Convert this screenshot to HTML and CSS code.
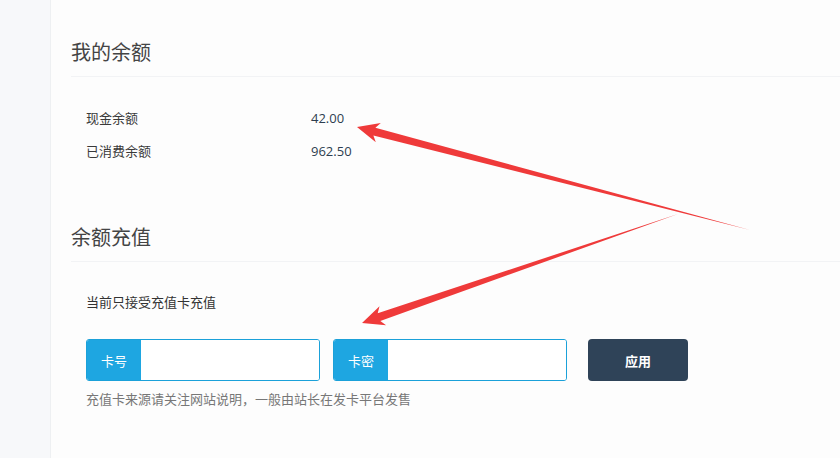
FILE: index.html
```html
<!DOCTYPE html>
<html lang="zh-CN">
<head>
    <meta charset="UTF-8">
    <meta name="viewport" content="width=device-width, initial-scale=1.0">
    <title>我的余额</title>
    <link rel="stylesheet" href="styles.css">
</head>
<body>
    <!-- Barra lateral -->
    <div class="sidebar"></div>

    <div class="main">
        <!-- Saldo -->
        <h2 class="section-title">我的余额</h2>
        <div class="balance">
            <div class="balance-row">
                <span class="balance-label">现金余额</span>
                <span class="balance-value">42.00</span>
            </div>
            <div class="balance-row">
                <span class="balance-label">已消费余额</span>
                <span class="balance-value">962.50</span>
            </div>
        </div>

        <!-- Recarga -->
        <h2 class="section-title second">余额充值</h2>
        <div class="recharge">
            <p class="recharge-note">当前只接受充值卡充值</p>
            <div class="recharge-form">
                <div class="input-group">
                    <span class="input-addon">卡号</span>
                    <input type="text" class="input-field">
                </div>
                <div class="input-group">
                    <span class="input-addon">卡密</span>
                    <input type="text" class="input-field">
                </div>
                <button type="button" class="apply-button">应用</button>
            </div>
            <p class="recharge-help">充值卡来源请关注网站说明，一般由站长在发卡平台发售</p>
        </div>
    </div>

    <!-- Flechas de anotación -->
    <svg class="annotations" width="840" height="458" viewBox="0 0 840 458" xmlns="http://www.w3.org/2000/svg">
        <polygon fill="#ef3a3a" points="357,127 375.8,142.3 373.4,135.5 750,230 375.4,127.7 380.8,122.9"></polygon>
        <polygon fill="#ef3a3a" points="362,323 386.1,325.3 380.3,320.9 678,214 377.7,313.3 379.5,306.3"></polygon>
    </svg>
</body>
</html>
```

FILE: styles.css
```css
body {
    margin: 0;
    height: 458px;
    display: flex;
    background-color: #fdfdfd;
    font-family: "Noto Sans CJK SC", "Open Sans", sans-serif;
    color: #333;
    overflow: hidden;
}

.sidebar {
    width: 50px;
    flex-shrink: 0;
    background-color: #f7f8fa;
    border-right: 1px solid #eef0f2;
}

.main {
    flex: 1;
    padding: 37px 0 0 20px;
}

.section-title {
    margin: 0;
    font-size: 20px;
    font-weight: normal;
    line-height: 30px;
    padding-bottom: 9px;
    border-bottom: 1px solid #f2f3f5;
    color: #444;
}

.section-title.second {
    margin-top: 55px;
}

.balance {
    margin-top: 24px;
    padding-left: 15px;
}

.balance-row {
    display: flex;
    align-items: center;
    height: 33px;
    font-size: 13px;
}

.balance-label {
    width: 225px;
    color: #3a3a3a;
}

.balance-value {
    font-family: "Open Sans", sans-serif;
    color: #2d3e50;
}

.recharge {
    padding-left: 15px;
}

.recharge-note {
    margin: 30px 0 0;
    font-size: 13px;
    line-height: 20px;
}

.recharge-form {
    margin-top: 27px;
    display: flex;
    align-items: center;
}

.input-group {
    display: flex;
    width: 234px;
    height: 42px;
    box-sizing: border-box;
    border: 1px solid #1ba1d9;
    border-radius: 3px;
    overflow: hidden;
    margin-right: 13px;
}

.input-addon {
    width: 54px;
    flex-shrink: 0;
    background-color: #1ea6e1;
    color: #fff;
    font-size: 13px;
    display: flex;
    align-items: center;
    justify-content: center;
}

.input-field {
    flex: 1;
    min-width: 0;
    border: none;
    outline: none;
    background: #fff;
}

.apply-button {
    margin-left: 8px;
    width: 100px;
    height: 42px;
    border: none;
    border-radius: 4px;
    background-color: #2f4358;
    color: #fff;
    font-family: "Noto Sans CJK SC", sans-serif;
    font-size: 13px;
    font-weight: bold;
    cursor: pointer;
}

.recharge-help {
    margin: 8px 0 0;
    font-size: 13px;
    line-height: 20px;
    color: #777;
}

.annotations {
    position: absolute;
    top: 0;
    left: 0;
    pointer-events: none;
}
```
